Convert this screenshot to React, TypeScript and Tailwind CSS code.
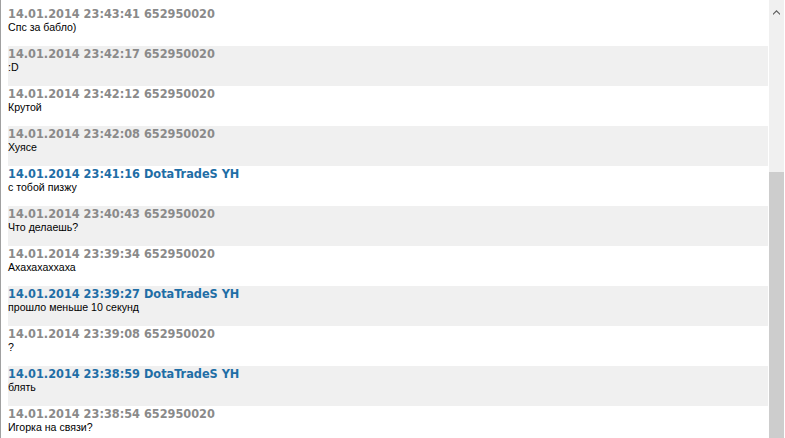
import React from 'react'

type Msg = { time: string; author: string; text: string; own?: boolean }

const messages: Msg[] = [
  { time: '14.01.2014 23:43:41', author: '652950020', text: 'Спс за бабло)' },
  { time: '14.01.2014 23:42:17', author: '652950020', text: ':D' },
  { time: '14.01.2014 23:42:12', author: '652950020', text: 'Крутой' },
  { time: '14.01.2014 23:42:08', author: '652950020', text: 'Хуясе' },
  { time: '14.01.2014 23:41:16', author: 'DotaTradeS YH', text: 'с тобой пизжу', own: true },
  { time: '14.01.2014 23:40:43', author: '652950020', text: 'Что делаешь?' },
  { time: '14.01.2014 23:39:34', author: '652950020', text: 'Ахахахаххаха' },
  { time: '14.01.2014 23:39:27', author: 'DotaTradeS YH', text: 'прошло меньше 10 секунд', own: true },
  { time: '14.01.2014 23:39:08', author: '652950020', text: '?' },
  { time: '14.01.2014 23:38:59', author: 'DotaTradeS YH', text: 'блять', own: true },
  { time: '14.01.2014 23:38:54', author: '652950020', text: 'Игорка на связи?' },
]

function ChatRow({ msg, shaded }: { msg: Msg; shaded: boolean }) {
  return (
    <div className={`h-10 shrink-0 ${shaded ? 'bg-[#f0f0f0]' : 'bg-white'}`}>
      <div
        className={`font-['DejaVu_Sans_Condensed','DejaVu_Sans',sans-serif] text-[12.6px] font-bold leading-[15px] ${msg.own ? 'text-[#1f6ea6]' : 'text-[#8a8a8a]'}`}
      >
        {msg.time} {msg.author}
      </div>
      <div className="font-['Liberation_Sans',Arial,sans-serif] text-[10.6px] leading-[12px] text-black">
        {msg.text}
      </div>
    </div>
  )
}

export default function App() {
  return (
    <div className="flex h-[438px] w-[785px] overflow-hidden bg-white">
      {/* message list */}
      <div className="flex w-[768px] shrink-0 border-l border-[#a0a0a0] pl-[7px] pt-[6px]">
        <div className="flex w-full flex-col">
          {messages.map((m, i) => (
            <ChatRow key={i} msg={m} shaded={i % 2 === 1} />
          ))}
        </div>
      </div>

      {/* scrollbar */}
      <div className="ml-px flex w-[15px] shrink-0 flex-col bg-[#f0f0f0]">
        <div className="flex h-[17px] items-end justify-center pb-[2px]">
          <svg width="7" height="5" viewBox="0 0 7 5" fill="#606060">
            <path d="M3.5 0 L7 3.5 L7 5 L3.5 1.8 L0 5 L0 3.5 Z" />
          </svg>
        </div>
        <div className="mt-[155px] flex-1 bg-[#cdcdcd]" />
      </div>
    </div>
  )
}
